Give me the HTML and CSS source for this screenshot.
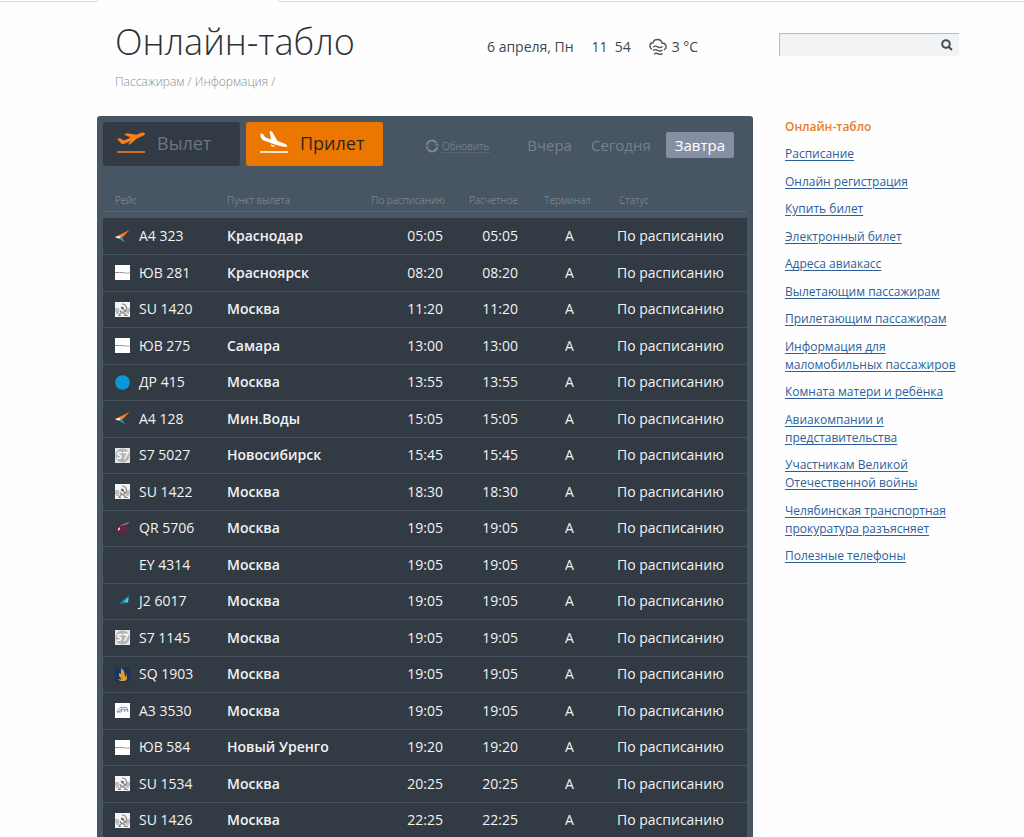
FILE: index.html
```html
<!DOCTYPE html>
<html lang="ru">
<head>
<meta charset="utf-8">
<meta name="viewport" content="width=device-width, initial-scale=1">
<title>Онлайн-табло</title>
<link rel="stylesheet" href="styles.css">
</head>
<body>
<svg class="sprite" aria-hidden="true">
  <symbol id="a4" viewBox="0 0 15 15"><path d="M14.500 1 0 8l3 1.500L8 8z" fill="#f47b2c"/><path d="M0 8l4.500-.8L6.500 8 3.500 9.600z" fill="#fff"/><path d="M3.500 9.500 6.500 8l4 5.500z" fill="#16a5bf"/></symbol>
  <symbol id="uv" viewBox="0 0 15 15"><path fill="#fff" d="M0 0h15v15H0z"/><path d="M0 7.500h4M8 8h7" stroke="#a9a4b2"/><path d="M1 7.500h8" stroke="#9a7288" stroke-dasharray="1.500 .4"/></symbol>
  <symbol id="su" viewBox="0 0 15 15"><path fill="#f4f4f4" d="M0 0h15v15H0z"/><g fill="none" stroke="#8a8a8a"><path d="M0 7h4M0 9h4M1 11h3M11 7h4M11 9h4M11 11h3"/><path d="M7 2c5 0 6 6 2 8-2 1-4-.5-4-2M6 5l5 5M4 13l3-3 4 3" stroke-width="1.200"/><path d="M3 13.500h3M9 13.500h4"/></g><circle cx="7.500" cy="6" r="1.300" fill="#666"/></symbol>
  <symbol id="dr" viewBox="0 0 15 15"><circle cx="7.500" cy="7.500" r="7.300" fill="#0997dc"/></symbol>
  <symbol id="s7" viewBox="0 0 15 15"><path fill="#e6e6e6" d="M0 0h15v15H0z"/><circle cx="7.500" cy="7.500" r="7" fill="#b5b5b5"/><path d="M7 4.500H4.500C2 4.500 2.500 7.200 4.500 7.200s2.200 3-.3 3H2M8 4.500h5L9.500 11" fill="none" stroke="#fff" stroke-width="1.400"/></symbol>
  <symbol id="qr" viewBox="0 0 15 15"><path d="M6 4 14.500.500 13 3 8 5z" fill="#77727b"/><path d="M1 8l3-3 3-1 3 1 1 4 1 4-3-2-2 2-2-3-3 1z" fill="#74213f"/><path d="M3 8l2-2v2l-2 2z" fill="#eee"/><path d="M5 4.500 8 4" stroke="#a44565"/></symbol>
  <symbol id="j2" viewBox="0 0 15 15"><path d="M14.500.500C12 3 7 6 4 10l9-1z" fill="#16769a"/><path d="M13.500 3 8 8l5 .5z" fill="#65bfd2"/></symbol>
  <symbol id="sq" viewBox="0 0 15 15"><path fill="#183568" d="M0 0h15v15H0z"/><path d="M6 1l3 3 1 5 1 1 1-4v6l-2 2H5L3 12l4 .5L4 9V6l2 1z" fill="#dc9d31"/></symbol>
  <symbol id="a3" viewBox="0 0 15 15"><path fill="#fff" d="M0 0h15v15H0z"/><path d="M2 9c1-4 5-6 10-4l1 4M4 9c2-4 4-3 8-2M6 6l1 3M9 6l1 3M2 9h4" fill="none" stroke="#6e8ab3"/></symbol>
</svg>

<div class="tabline"><span></span><span></span><span></span></div>

<div class="page">
  <header class="top">
    <div class="heading">
      <h1>Онлайн-табло</h1>
      <p class="crumbs">Пассажирам / Информация /</p>
    </div>
    <div class="now">
      <span class="date">6 апреля, Пн</span>
      <span class="clock"><span>11</span><span>54</span></span>
      <span class="weather">
        <svg width="18" height="18" viewBox="0 0 18 18" fill="none" stroke="#4a5661" stroke-width="1.400" stroke-linecap="round"><path d="M2.500 11C0 9 .5 5 4 4.800 5 .3 12 .3 13 5c4 .2 5.500 4.500 2.500 6.500"/><path d="M4.500 8.800c1.500-1.200 2.500-1 4.200 0s2.700 1 4.300 0M4.500 12.300c1.500-1.200 2.500-1 4.200 0s2.700 1 4.300 0M5.500 15.800c1.500-1.200 2-1 3.700 0s2.200 1 3.800 0"/></svg>
        3 °C
      </span>
    </div>
    <form class="search" role="search">
      <input type="text" aria-label="Поиск">
      <button type="button" aria-label="Найти"><svg width="12" height="12" viewBox="0 0 12 12" fill="none" stroke="#3f4e5b" stroke-width="2"><circle cx="5" cy="5" r="3.800"/><path d="M7.700 7.700 11 11"/></svg></button>
    </form>
  </header>

  <main class="board">
    <div class="controls">
      <button type="button" class="tab"><svg width="30" height="24" viewBox="0 0 30 24"><path d="M1 7.800 4 7.200l4 2.300 6.500-3L8 3.500l3-1.200 9.500 1.500 3.500-1.600c2-.9 4.500-.7 5 .2 0 1-1 2-2.500 2.700L21 7.500 14.500 13l-2.500.5 2.500-3.500L9 12.500c-2 .8-3.500.5-4.500-.8z" fill="#f98012"/><path fill="#c8711e" d="M1 20h28v2H1z"/></svg>Вылет</button>
      <button type="button" class="tab active"><svg width="30" height="24" viewBox="0 0 30 24"><path d="M1.500 2.500 4 3l2.500 3.500 5.500 2L10.500 0l2.500.5 5.500 9.500 5.500 2c2.500 1 4 2 4.500 3.500-1.500.6-3 .4-5 0l-6-1.500L6 10C3.500 9 2 7.500 1.500 5.500z" fill="#fff"/><path d="M12 13.500l4 1.500-1 1-3-1z" fill="#fff"/><path fill="#ffdfbd" d="M1 20h28v2H1z"/></svg>Прилет</button>
      <button type="button" class="refresh"><svg width="14" height="14" viewBox="0 0 14 14" fill="none" stroke="#7d8797" stroke-width="1.800"><path d="M1.800 6A5.300 5.300 0 0 1 11.500 4M12.200 8A5.300 5.300 0 0 1 2.500 10"/><path d="M10 6.500h4L12 4zM0 7.500h4L2 10z" fill="#7d8797" stroke="none"/></svg><span>Обновить</span></button>
      <div class="days">
        <button type="button">Вчера</button>
        <button type="button">Сегодня</button>
        <button type="button" class="current">Завтра</button>
      </div>
    </div>

    <table class="flights">
      <colgroup><col class="c-flight"><col><col class="c-plan"><col class="c-actual"><col class="c-term"><col class="c-status"></colgroup>
      <thead>
        <tr><th>Рейс</th><th>Пункт вылета</th><th>По расписанию</th><th>Расчетное</th><th>Терминал</th><th>Статус</th></tr>
      </thead>
      <tbody>
        <tr><td><span><svg><use href="#a4"/></svg>А4 323</span></td><td>Краснодар</td><td>05:05</td><td>05:05</td><td>А</td><td>По расписанию</td></tr>
        <tr><td><span><svg><use href="#uv"/></svg>ЮВ 281</span></td><td>Красноярск</td><td>08:20</td><td>08:20</td><td>А</td><td>По расписанию</td></tr>
        <tr><td><span><svg><use href="#su"/></svg>SU 1420</span></td><td>Москва</td><td>11:20</td><td>11:20</td><td>А</td><td>По расписанию</td></tr>
        <tr><td><span><svg><use href="#uv"/></svg>ЮВ 275</span></td><td>Самара</td><td>13:00</td><td>13:00</td><td>А</td><td>По расписанию</td></tr>
        <tr><td><span><svg><use href="#dr"/></svg>ДР 415</span></td><td>Москва</td><td>13:55</td><td>13:55</td><td>А</td><td>По расписанию</td></tr>
        <tr><td><span><svg><use href="#a4"/></svg>А4 128</span></td><td>Мин.Воды</td><td>15:05</td><td>15:05</td><td>А</td><td>По расписанию</td></tr>
        <tr><td><span><svg><use href="#s7"/></svg>S7 5027</span></td><td>Новосибирск</td><td>15:45</td><td>15:45</td><td>А</td><td>По расписанию</td></tr>
        <tr><td><span><svg><use href="#su"/></svg>SU 1422</span></td><td>Москва</td><td>18:30</td><td>18:30</td><td>А</td><td>По расписанию</td></tr>
        <tr><td><span><svg><use href="#qr"/></svg>QR 5706</span></td><td>Москва</td><td>19:05</td><td>19:05</td><td>А</td><td>По расписанию</td></tr>
        <tr><td><span><svg></svg>EY 4314</span></td><td>Москва</td><td>19:05</td><td>19:05</td><td>А</td><td>По расписанию</td></tr>
        <tr><td><span><svg><use href="#j2"/></svg>J2 6017</span></td><td>Москва</td><td>19:05</td><td>19:05</td><td>А</td><td>По расписанию</td></tr>
        <tr><td><span><svg><use href="#s7"/></svg>S7 1145</span></td><td>Москва</td><td>19:05</td><td>19:05</td><td>А</td><td>По расписанию</td></tr>
        <tr><td><span><svg><use href="#sq"/></svg>SQ 1903</span></td><td>Москва</td><td>19:05</td><td>19:05</td><td>А</td><td>По расписанию</td></tr>
        <tr><td><span><svg><use href="#a3"/></svg>А3 3530</span></td><td>Москва</td><td>19:05</td><td>19:05</td><td>А</td><td>По расписанию</td></tr>
        <tr><td><span><svg><use href="#uv"/></svg>ЮВ 584</span></td><td>Новый Уренго</td><td>19:20</td><td>19:20</td><td>А</td><td>По расписанию</td></tr>
        <tr><td><span><svg><use href="#su"/></svg>SU 1534</span></td><td>Москва</td><td>20:25</td><td>20:25</td><td>А</td><td>По расписанию</td></tr>
        <tr><td><span><svg><use href="#su"/></svg>SU 1426</span></td><td>Москва</td><td>22:25</td><td>22:25</td><td>А</td><td>По расписанию</td></tr>
      </tbody>
    </table>
  </main>

  <nav class="side">
    <ul>
      <li class="here">Онлайн-табло</li>
      <li><a href="#">Расписание</a></li>
      <li><a href="#">Онлайн регистрация</a></li>
      <li><a href="#">Купить билет</a></li>
      <li><a href="#">Электронный билет</a></li>
      <li><a href="#">Адреса авиакасс</a></li>
      <li><a href="#">Вылетающим пассажирам</a></li>
      <li><a href="#">Прилетающим пассажирам</a></li>
      <li><a href="#">Информация для маломобильных пассажиров</a></li>
      <li><a href="#">Комната матери и ребёнка</a></li>
      <li><a href="#">Авиакомпании и представительства</a></li>
      <li><a href="#">Участникам Великой Отечественной войны</a></li>
      <li><a href="#">Челябинская транспортная прокуратура разъясняет</a></li>
      <li><a href="#">Полезные телефоны</a></li>
    </ul>
  </nav>
</div>
</body>
</html>
```
FILE: styles.css
```css
* { box-sizing: border-box; }

body {
  margin: 0;
  background: #fefefe;
  color: #3c4650;
  font-family: "Open Sans", sans-serif;
  font-size: 14px;
}

button {
  border: 0;
  padding: 0;
  background: none;
  font-family: inherit;
  cursor: pointer;
}

.sprite {
  position: absolute;
  width: 0;
  height: 0;
}

.tabline {
  display: grid;
  grid-template-columns: 97px 182px 1fr;
  height: 2px;
}

.tabline span { border-bottom: 1px solid #dcdddf; }
.tabline span:nth-child(2) {
  border: solid #dcdddf;
  border-width: 0 1px;
}

.page {
  display: grid;
  grid-template-columns: minmax(0, 1fr) 174px;
  column-gap: 32px;
  padding: 0 65px 0 97px;
}

.top {
  grid-column: 1 / -1;
  display: grid;
  grid-template-columns: 372px 1fr 180px;
  align-items: start;
  height: 114px;
  padding-left: 18px;
}

h1 {
  margin: 14px 0 0;
  color: #2c323a;
  font-size: 36px;
  font-weight: 300;
  line-height: 52px;
}

.crumbs {
  margin: 5px 0 0;
  color: #858d98;
  font-size: 12px;
  font-weight: 300;
  line-height: 18px;
}

.now {
  display: flex;
  align-items: center;
  gap: 18px;
  padding-top: 35px;
  line-height: 20px;
}

.clock {
  display: flex;
  gap: 7px;
}

.weather {
  display: flex;
  align-items: center;
  gap: 5px;
}

.search {
  display: flex;
  height: 23px;
  margin-top: 31px;
  border: solid #b9bbbf;
  border-width: 1px 0 0 1px;
  background: #f2f3f5;
}

.search input {
  flex: 1;
  min-width: 0;
  border: 0;
  background: none;
}

.search button {
  display: grid;
  place-items: center;
  width: 24px;
}

.board {
  padding: 6px 6px 0;
  border-radius: 3px 3px 0 0;
  background: #485562;
}

.controls {
  display: flex;
  align-items: center;
  height: 44px;
}

.tab {
  display: flex;
  align-items: center;
  gap: 11px;
  width: 137px;
  height: 44px;
  margin-right: 6px;
  padding: 0 0 2px 13px;
  border-radius: 3px;
  background: #323a43;
  color: #6c7685;
  font-size: 18px;
}

.tab.active {
  background: #ec7700;
  color: #2b2720;
}

.refresh {
  display: flex;
  align-items: center;
  gap: 3px;
  margin: 4px 0 0 36px;
  color: #8791a0;
  font-size: 10px;
  font-weight: 300;
  line-height: 12px;
}

.refresh span { border-bottom: 1px dotted #697483; }

.days {
  display: flex;
  gap: 11px;
  margin: 2px 13px 0 auto;
}

.days button {
  padding: 0 4px;
  color: #75808f;
  font-size: 15px;
  line-height: 26px;
}

.days .current {
  padding: 0 9px;
  border-radius: 2px;
  background: #858fa4;
  color: #fff;
}

.flights {
  width: 100%;
  margin-top: 24px;
  border-collapse: separate;
  border-spacing: 0;
  table-layout: fixed;
}

.c-flight { width: 124px; }
.c-plan { width: 75px; }
.c-actual { width: 73px; }
.c-term { width: 99px; }
.c-status { width: 130px; }

th, td {
  padding: 0;
  text-align: left;
  white-space: nowrap;
}

th {
  height: 28px;
  border-bottom: 6px solid #485562;
  box-shadow: inset 0 -1px #586471;
  color: #8b95a4;
  font-size: 10px;
  font-weight: 300;
  line-height: 20px;
  vertical-align: top;
}

tbody tr {
  height: 36px;
  background: #323a43;
}

tbody tr:nth-child(even) { height: 37px; }
tbody tr + tr td { box-shadow: inset 0 1px #46525d; }

td {
  color: #f2f3f4;
  line-height: 20px;
}

th:first-child, td:first-child { padding-left: 12px; }
td:nth-child(2) { font-weight: 600; }
th:nth-child(3), td:nth-child(3),
th:nth-child(4), td:nth-child(4) { text-align: right; }
td:nth-child(3) { padding-right: 2px; }
th:nth-child(5), td:nth-child(5) { text-align: center; }
td:nth-child(5) { padding-left: 4px; }
th:nth-child(6) { padding-left: 2px; }

td span {
  display: flex;
  align-items: center;
  gap: 9px;
}

td svg {
  width: 15px;
  height: 15px;
}

.side ul {
  margin: 0;
  padding: 2px 0 0;
  list-style: none;
  font-size: 12px;
  line-height: 18px;
}

.side li { margin-bottom: 9px; }
.side li:nth-child(even) { margin-bottom: 10px; }

.side .here {
  color: #e87d2a;
  font-weight: 600;
}

.side a {
  color: #2d5f9b;
  text-underline-offset: 2px;
}
```
